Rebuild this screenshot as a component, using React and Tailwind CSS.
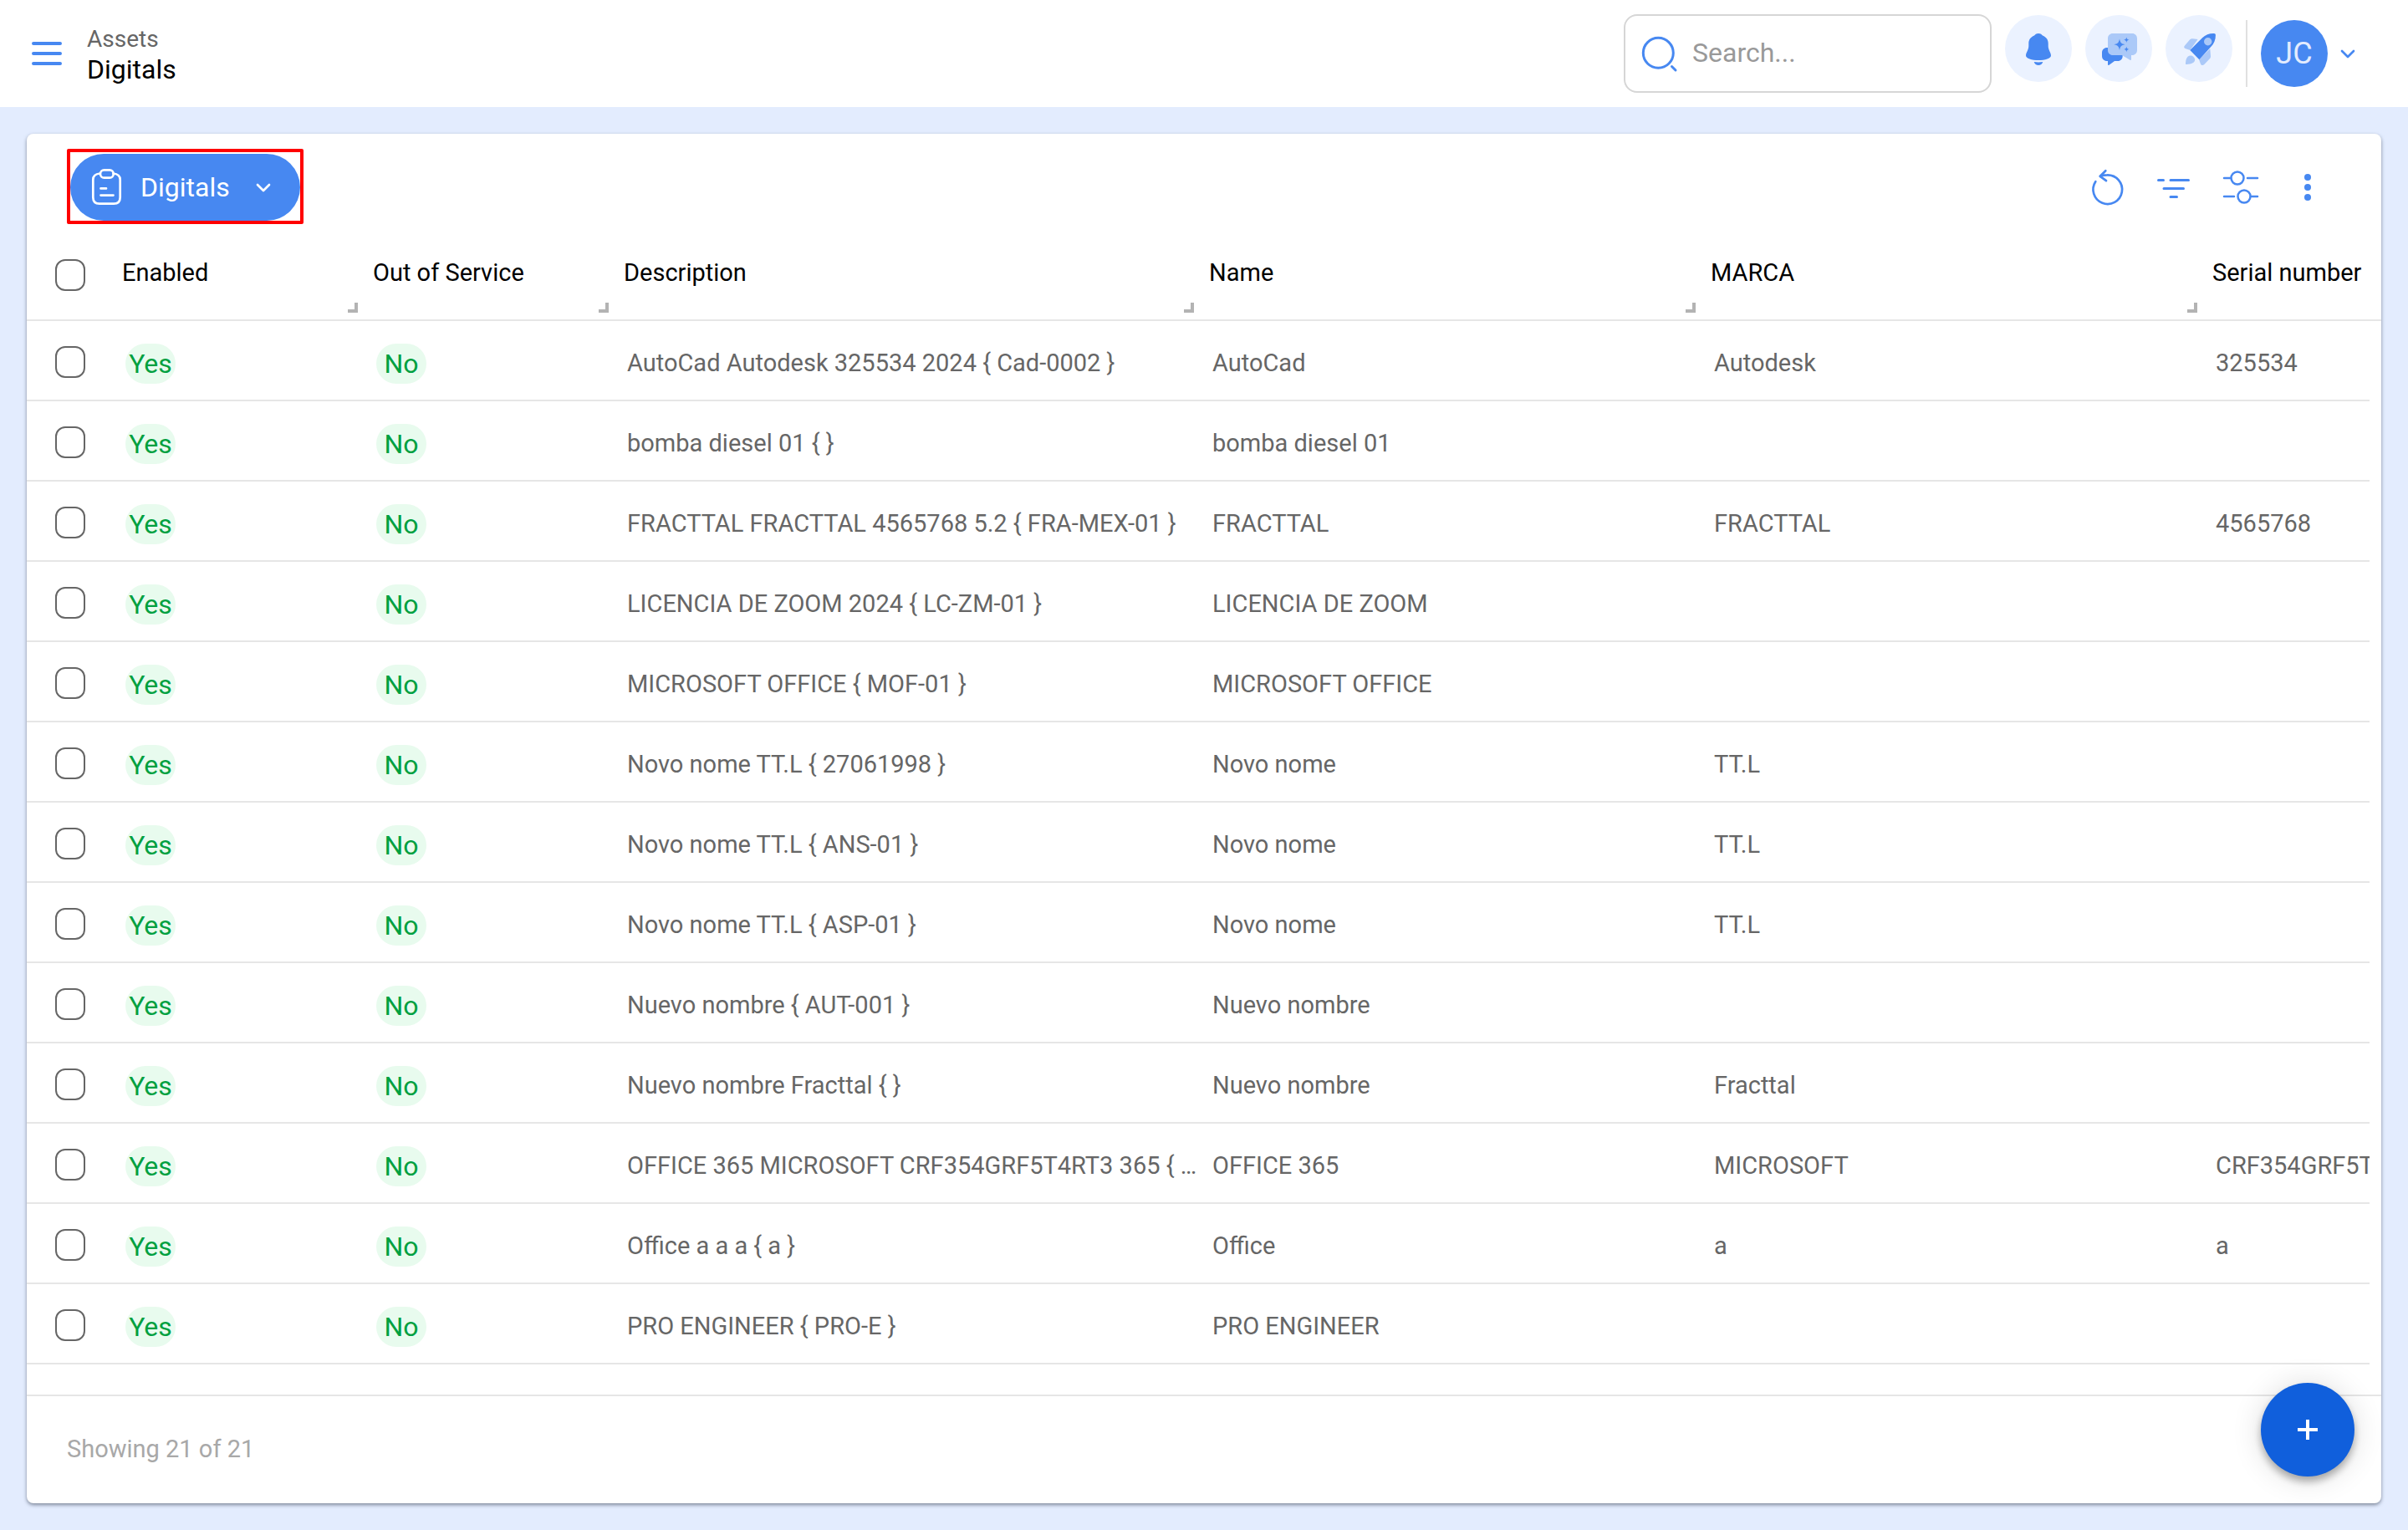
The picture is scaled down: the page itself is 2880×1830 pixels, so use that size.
import { useState } from "react";

const ROWS = [
  { description: "AutoCad Autodesk 325534 2024 { Cad-0002 }", name: "AutoCad", brand: "Autodesk", serial: "325534" },
  { description: "bomba diesel 01 { }", name: "bomba diesel 01", brand: "", serial: "" },
  { description: "FRACTTAL FRACTTAL 4565768 5.2 { FRA-MEX-01 }", name: "FRACTTAL", brand: "FRACTTAL", serial: "4565768" },
  { description: "LICENCIA DE ZOOM 2024 { LC-ZM-01 }", name: "LICENCIA DE ZOOM", brand: "", serial: "" },
  { description: "MICROSOFT OFFICE { MOF-01 }", name: "MICROSOFT OFFICE", brand: "", serial: "" },
  { description: "Novo nome TT.L { 27061998 }", name: "Novo nome", brand: "TT.L", serial: "" },
  { description: "Novo nome TT.L { ANS-01 }", name: "Novo nome", brand: "TT.L", serial: "" },
  { description: "Novo nome TT.L { ASP-01 }", name: "Novo nome", brand: "TT.L", serial: "" },
  { description: "Nuevo nombre { AUT-001 }", name: "Nuevo nombre", brand: "", serial: "" },
  { description: "Nuevo nombre Fracttal { }", name: "Nuevo nombre", brand: "Fracttal", serial: "" },
  { description: "OFFICE 365 MICROSOFT CRF354GRF5T4RT3 365 { …", name: "OFFICE 365", brand: "MICROSOFT", serial: "CRF354GRF5T" },
  { description: "Office a a a { a }", name: "Office", brand: "a", serial: "a" },
  { description: "PRO ENGINEER { PRO-E }", name: "PRO ENGINEER", brand: "", serial: "" },
];

const COLUMNS = ["Enabled", "Out of Service", "Description", "Name", "MARCA", "Serial number"];

// -----------------------------
// ICONS
// -----------------------------
const Icon = ({ children, width = "2.7" }) => (
  <svg
    viewBox="0 0 48 48"
    className="size-12 shrink-0"
    fill="none"
    stroke="currentColor"
    strokeWidth={width}
    strokeLinecap="round"
    strokeLinejoin="round"
    aria-hidden="true"
  >
    {children}
  </svg>
);

const Chevron = () => (
  <svg viewBox="0 0 24 24" className="size-6 shrink-0" fill="none" stroke="currentColor" strokeWidth="2.7" strokeLinecap="round" strokeLinejoin="round" aria-hidden="true">
    <path d="M5 9l7 7 7-7" />
  </svg>
);

const BellIcon = () => (
  <Icon>
    <g fill="currentColor" stroke="none">
      <path d="M24 6c2.600 0 4 1.300 5 2.600C33.500 10.500 35.700 13.800 35.700 18v3c0 5 3.300 7.500 3.300 11.500 0 3.500-7 5.500-15 5.500s-15-2-15-5.500c0-4 3.300-6.500 3.300-11.500v-3c0-4.200 2.200-7.500 6.700-9.400 1-1.300 2.400-2.600 5-2.600z" />
      <path d="M18.700 40c3.500.600 7.100.600 10.600 0-.800 2.500-2.700 4-5.300 4s-4.500-1.500-5.300-4z" />
    </g>
  </Icon>
);

const ChatIcon = () => (
  <Icon>
    <g fill="currentColor" stroke="none">
      <path d="M10 23h13c3.300 0 5.700 2.400 5.700 5.500V33c0 3.500-2.400 6-5.700 6h-4l-6.500 4.800c-.800.500-1.500.200-1.500-.600V39h-1c-3.400 0-6-2.500-6-6v-4c0-3.500 2.600-6 6-6z" />
      <path d="M17 6h23c3.500 0 6 2.500 6 6v14c0 3.500-2.500 6-6 6h-1v5c0 1-.700 1.300-1.500.800L28 32H17c-3.500 0-6-2.500-6-6V12c0-3.500 2.500-6 6-6z" className="text-[#abc9f8]" />
      <path d="M25 12.600c.900 4.600 2.100 5.800 6.700 6.700-4.600.900-5.800 2.100-6.700 6.700-.9-4.600-2.100-5.800-6.700-6.700 4.600-.9 5.800-2.100 6.700-6.700z" />
      <path d="M33.300 10.500c.400 2.200 1 2.800 3.200 3.200-2.200.400-2.800 1-3.200 3.200-.4-2.200-1-2.800-3.200-3.200 2.200-.4 2.800-1 3.200-3.200zM33.300 21.800c.400 2.200 1 2.800 3.200 3.200-2.200.400-2.800 1-3.200 3.200-.4-2.200-1-2.800-3.200-3.200 2.200-.4 2.800-1 3.200-3.200z" />
    </g>
  </Icon>
);

const RocketIcon = () => (
  <Icon>
    <g fill="currentColor" stroke="none">
      <g className="text-[#abc9f8]">
        <path d="M13.300 26l-5.800-2c-1.500-.6-1.700-2-.7-3.200l6-7c1-1.200 2.200-1.700 3.800-1.500l6 .7z" />
        <path d="M24 37.300l13.300-13 .7 8.700c.100 1.500-.3 2.600-1.400 3.600l-6.500 6.700c-1.300 1.200-3.300 1-4.100-.8z" />
        <path d="M8 42.700c0-3 .3-6.200 2-8.200 2-2.300 5.200-2.600 7.500-.6 2.300 2.100 2.200 5 0 6.900-2.500 1.700-6.300 2.300-9 2.200z" />
      </g>
      <path d="M13.300 26L28 11.300c4-4 8.500-5.500 14-5.300 1.300 0 1.900.700 1.900 2 .1 5.700-1.900 10.300-5.900 14.300L24.300 37.300z" />
      <circle cx="34.700" cy="15.700" r="4.700" className="text-[#abc9f8]" />
    </g>
  </Icon>
);

const ClipboardIcon = () => (
  <Icon>
    <path d="M15.500 7.500C10 8 7.300 10 7.300 15v21c0 5 2.700 7.700 7.700 7.700h17c5 0 7.700-2.700 7.700-7.700V15c0-5-2.700-7-8.200-7.500" />
    <rect x="16" y="3.300" width="15.700" height="9.400" rx="4.500" />
    <path d="M16.500 25.400h6.500M16.500 33.600h15" />
  </Icon>
);

const RefreshIcon = () => (
  <Icon>
    <path d="M10.300 17.200A17.300 17.300 0 1 0 24.300 9.400c-3 0-5.800.500-8.400 1.400" />
    <path d="M22.300 4.300l-6.500 6.500 7.200 5.300" />
  </Icon>
);

const FilterIcon = () => (
  <Icon width="3">
    <path d="M5.500 15.600h6M20 15.600h21.500M12 25.400h23.500M20 35.600h7.500" />
  </Icon>
);

const SlidersIcon = () => (
  <Icon width="2.500">
    <circle cx="20" cy="13" r="7.500" />
    <circle cx="28" cy="35" r="7.500" />
    <path d="M4 13h8M32 13h12M4 35h12M36 35h8" />
  </Icon>
);

const DotsIcon = () => (
  <Icon>
    <g fill="currentColor" stroke="none">
      <circle cx="24" cy="12" r="4" />
      <circle cx="24" cy="24" r="4" />
      <circle cx="24" cy="36" r="4" />
    </g>
  </Icon>
);

const HEADER_ACTIONS = [
  { label: "Notifications", icon: <BellIcon /> },
  { label: "Assistant", icon: <ChatIcon /> },
  { label: "What's new", icon: <RocketIcon /> },
];

const TOOLBAR_ACTIONS = [
  { label: "Refresh", icon: <RefreshIcon /> },
  { label: "Filter", icon: <FilterIcon /> },
  { label: "Configure columns", icon: <SlidersIcon /> },
  { label: "More options", icon: <DotsIcon /> },
];

// -----------------------------
// SMALL PARTS
// -----------------------------
const Checkbox = ({ label, checked, onChange }) => (
  <input
    type="checkbox"
    aria-label={label}
    checked={checked}
    onChange={onChange}
    className="block h-[38px] w-9 appearance-none rounded-xl border-2 border-[#666666] bg-white checked:bg-[#4788f1]"
  />
);

const Badge = ({ children }) => (
  <span className="flex h-12 w-15 items-center justify-center rounded-full bg-[#e8fbee] text-[32px] text-[#00a040]">
    {children}
  </span>
);

const Header = () => (
  <header className="flex h-32 items-center bg-white pr-15 pl-8">
    <button type="button" aria-label="Menu" className="text-[#4788f1]">
      <Icon width="4">
        <path d="M8 12h32M8 24h32M8 36h32" />
      </Icon>
    </button>
    <div className="ml-6 pt-0.5 leading-9">
      <p className="text-[28px] text-[#666666]">Assets</p>
      <h1 className="text-[32px] text-black">Digitals</h1>
    </div>

    <div className="ml-auto flex items-center gap-4">
      <label className="flex h-[94px] w-110 items-center gap-4 rounded-2xl border-2 border-[#d6d6d6] px-4 text-[#4788f1]">
        <Icon width="3">
          <circle cx="23.300" cy="23.300" r="18" />
          <path d="M39.500 39.500l4.500 4.500" />
        </Icon>
        <input
          type="search"
          aria-label="Search"
          placeholder="Search..."
          className="w-full min-w-0 bg-transparent pb-0.5 text-[32px] text-black outline-none placeholder:text-[#999999]"
        />
      </label>
      <div className="flex gap-4 pb-3">
        {HEADER_ACTIONS.map((action) => (
          <button
            key={action.label}
            type="button"
            aria-label={action.label}
            className="flex size-20 items-center justify-center rounded-full bg-[#ebf2ff] text-[#4788f1]"
          >
            {action.icon}
          </button>
        ))}
      </div>
      <button type="button" aria-label="Account" className="flex items-center gap-3 border-l-2 border-[#e0e0e0] pl-4 text-[#4788f1]">
        <span className="flex size-20 items-center justify-center rounded-full bg-[#4788f1] text-4xl text-[#e3ecfe]">
          JC
        </span>
        <Chevron />
      </button>
    </div>
  </header>
);

const Toolbar = () => (
  <div className="flex h-32 items-center justify-between px-12">
    <div className="mb-0.5 rounded-xs border-4 border-[#ff0000] pt-0.5">
      <button
        type="button"
        className="flex h-20 items-center gap-4 rounded-full bg-[#4788f1] pr-8 pl-5 text-[32px] text-white"
      >
        <ClipboardIcon />
        <span className="mr-3">Digitals</span>
        <Chevron />
      </button>
    </div>
    <div className="flex text-[#4788f1]">
      {TOOLBAR_ACTIONS.map((action) => (
        <button key={action.label} type="button" aria-label={action.label} className="flex size-20 items-center justify-center">
          {action.icon}
        </button>
      ))}
    </div>
  </div>
);

const AssetsTable = () => {
  const [selected, setSelected] = useState([]);

  const toggleRow = (index) => {
    setSelected((prev) =>
      prev.includes(index) ? prev.filter((i) => i !== index) : [...prev, index]
    );
  };

  const toggleAll = () => {
    setSelected(selected.length === ROWS.length ? [] : ROWS.map((_, i) => i));
  };

  const cell = "border-b-2 border-[#e6e6e6] pt-2 pl-5 whitespace-nowrap";

  return (
    <table className="w-full table-fixed border-separate border-spacing-0 text-left text-[29px] text-[#666666]">
      <colgroup>
        <col className="w-[98px]" />
        <col className="w-[300px]" />
        <col className="w-[300px]" />
        <col className="w-[700px]" />
        <col className="w-[600px]" />
        <col className="w-[600px]" />
        <col />
        <col className="w-[14px]" />
      </colgroup>
      <thead>
        <tr className="h-24 text-black">
          <th className="border-b-2 border-[#e6e6e6] pb-3 pl-[34px]">
            <Checkbox label="Select all" checked={selected.length === ROWS.length} onChange={toggleAll} />
          </th>
          {COLUMNS.map((column, i) => (
            <th key={column} className="relative border-b-2 border-[#e6e6e6] pb-4 pl-4 font-normal whitespace-nowrap">
              {column}
              {i < COLUMNS.length - 1 && (
                <span className="absolute right-0.5 bottom-2 size-3 border-r-4 border-b-4 border-[#b3b3b3]" />
              )}
            </th>
          ))}
          <td className="border-b-2 border-[#e6e6e6]" />
        </tr>
      </thead>
      <tbody>
        {ROWS.map((row, index) => (
          <tr key={row.description} className="h-24">
            <td className="border-b-2 border-[#e6e6e6] pt-1 pl-[34px]">
              <Checkbox label={`Select ${row.description}`} checked={selected.includes(index)} onChange={() => toggleRow(index)} />
            </td>
            <td className={cell}>
              <Badge>Yes</Badge>
            </td>
            <td className={cell}>
              <Badge>No</Badge>
            </td>
            <td className={cell}>{row.description}</td>
            <td className={cell}>{row.name}</td>
            <td className={cell}>{row.brand}</td>
            <td className={`${cell} overflow-hidden`}>{row.serial}</td>
            <td />
          </tr>
        ))}
      </tbody>
    </table>
  );
};

const App = () => {
  return (
    <div className="flex min-h-screen flex-col bg-[#e3ecfe] font-[Roboto,sans-serif]">
      <Header />
      <main className="flex grow flex-col p-8">
        <section className="flex grow flex-col rounded-lg bg-white shadow-[0_2px_4px_rgba(60,70,90,0.6)]">
          <Toolbar />
          <AssetsTable />
          <footer className="mt-auto flex h-[130px] items-center border-t-2 border-[#e6e6e6] pl-12 text-[29px] text-[#a8a8a8]">
            Showing 21 of 21
          </footer>
        </section>
      </main>
      <button
        type="button"
        aria-label="Add asset"
        className="fixed right-16 bottom-16 flex size-28 items-center justify-center rounded-full bg-[#105fdc] text-white shadow-[0_6px_10px_rgba(0,0,0,0.3),0_2px_36px_rgba(0,0,0,0.14)]"
      >
        <svg viewBox="0 0 24 24" className="size-6" stroke="currentColor" strokeWidth="4" aria-hidden="true">
          <path d="M12 0v24M0 12h24" />
        </svg>
      </button>
    </div>
  );
};

export default App;
